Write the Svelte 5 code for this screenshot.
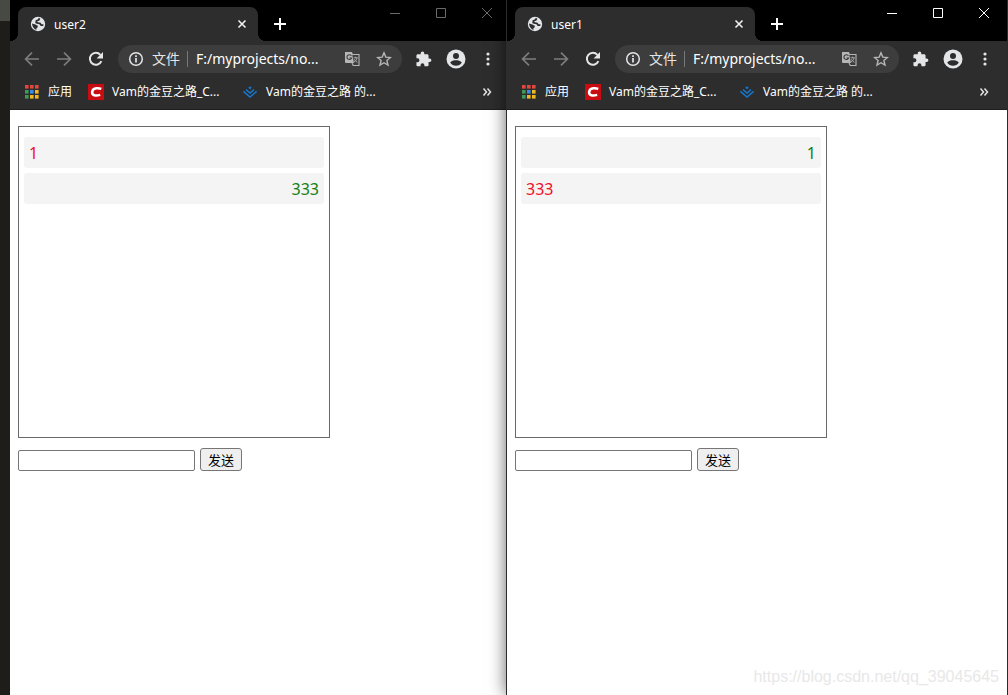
<script>
  const windows = [
    {
      name: 'user2',
      active: false,
      messages: [
        { text: '1', own: false },
        { text: '333', own: true }
      ]
    },
    {
      name: 'user1',
      active: true,
      messages: [
        { text: '1', own: true },
        { text: '333', own: false }
      ]
    }
  ];
  const cells = [
    '#e0483e', '#e0483e', '#e0483e',
    '#3f9b58', '#3b8be8', '#f2b824',
    '#3f9b58', '#f2b824', '#f2b824'
  ];
</script>

<main class="desktop">
  <div class="backdrop"></div>
  {#each windows as win}
    <section class="window" class:active={win.active} aria-label={win.name}>
      <header class="titlebar">
        <div class="tab">
          <svg class="globe" width="16" height="16" viewBox="0 0 16 16" aria-hidden="true">
            <circle cx="8" cy="8" r="7.2" fill="#e4e5e7" />
            <path d="M9.6 2.2 8.6 4 6.4 4.8 6.2 6.6 8.2 7.2 10 7.4 11 9 13.4 9.2" fill="none" stroke="#2d2d2d" stroke-width="1.8" stroke-linejoin="round" />
            <path d="M2 7.6 5.4 8.6 7.8 9.8 7.6 11.4 6.4 12.2 6.4 14Q2.400 12.400 2 7.600z" fill="#2d2d2d" />
          </svg>
          <span class="title">{win.name}</span>
          <button class="tab-close" aria-label="关闭标签页">
            <svg width="16" height="16" viewBox="0 0 16 16"><path d="M4.5 4.5l7 7M11.5 4.5l-7 7" stroke="#f1f1f1" stroke-width="1.6" /></svg>
          </button>
        </div>
        <button class="new-tab" aria-label="新标签页">
          <svg width="16" height="16" viewBox="0 0 16 16"><path d="M8 2v12M2 8h12" stroke="#fff" stroke-width="2" /></svg>
        </button>
        <div class="controls">
          <button aria-label="最小化"><svg width="12" height="12" viewBox="0 0 12 12"><path d="M1 6.5h10" /></svg></button>
          <button aria-label="最大化"><svg width="12" height="12" viewBox="0 0 12 12"><path d="M1.5 1.5h9v9h-9z" /></svg></button>
          <button aria-label="关闭"><svg width="12" height="12" viewBox="0 0 12 12"><path d="M1 1l10 10M11 1L1 11" /></svg></button>
        </div>
      </header>

      <nav class="toolbar" aria-label="导航">
        <button class="tool dim" aria-label="后退">
          <svg width="16" height="16" viewBox="0 0 16 16"><path d="M15 8H2M8 1.6 1.6 8 8 14.4" fill="none" stroke="currentColor" stroke-width="1.7" /></svg>
        </button>
        <button class="tool dim" aria-label="前进">
          <svg width="16" height="16" viewBox="0 0 16 16"><path d="M1 8h13M8 1.6 14.4 8 8 14.4" fill="none" stroke="currentColor" stroke-width="1.7" /></svg>
        </button>
        <button class="tool" aria-label="重新加载">
          <svg width="16" height="16" viewBox="0 0 16 16"><path d="M13.4 10.2A6 6 0 1 1 12.4 3.8" fill="none" stroke="currentColor" stroke-width="2" /><path d="M15 1v6.4H8.6z" fill="currentColor" /></svg>
        </button>
        <div class="omnibox">
          <svg class="info" width="16" height="16" viewBox="0 0 16 16" aria-hidden="true"><circle cx="8" cy="8" r="6.3" fill="none" stroke="#e4e5e7" stroke-width="1.5" /><path d="M8 7v4.6M8 4.3v1.7" stroke="#e4e5e7" stroke-width="1.7" /></svg>
          <span class="scheme">文件</span>
          <input class="url" aria-label="地址" value="F:/myprojects/no..." />
          <button class="tool soft" aria-label="翻译">
            <svg width="16" height="16" viewBox="0 0 16 16"><path d="M1 1h7l1 2.5h-.8L10 12H2a1 1 0 0 1-1-1z" fill="#b5b6b8" /><path d="M8.2 3.5H15v11H9.2L8 12" fill="none" stroke="#b5b6b8" stroke-width="1.1" /><path d="M7.4 4.9A2.4 2.4 0 1 0 7.6 7H5.4" fill="none" stroke="#3b3b3b" stroke-width="1.1" /><path d="M9.6 6.8h4.2M11.6 5.6v1.2M13 7c-.4 2-1.6 3.2-3 4M10.4 8.2c.6 1.3 1.6 2.4 3 3.2" fill="none" stroke="#b5b6b8" stroke-width=".9" /></svg>
          </button>
          <button class="tool soft" aria-label="添加书签">
            <svg width="16" height="16" viewBox="0 0 16 16"><path d="M8 1.8l1.8 4.3 4.6.4-3.5 3 1.1 4.6L8 11.7l-4 2.4 1.1-4.6-3.5-3 4.6-.4z" fill="none" stroke="currentColor" stroke-width="1.4" /></svg>
          </button>
        </div>
        <button class="tool" aria-label="扩展程序">
          <svg width="16" height="16" viewBox="0 0 24 24"><path transform="translate(-1.5 -.5) scale(1.07)" fill="currentColor" d="M20.5 11H19V7c0-1.1-.9-2-2-2h-4V3.500a2.500 2.500 0 0 0-5 0V5H4c-1.100 0-2 .9-2 2v3.800h1.500a2.700 2.700 0 0 1 0 5.400H2V20c0 1.100.9 2 2 2h3.800v-1.500a2.700 2.700 0 0 1 5.400 0V22H17c1.100 0 2-.9 2-2v-4h1.500a2.500 2.500 0 0 0 0-5z" /></svg>
        </button>
        <button class="tool" aria-label="个人资料">
          <svg width="20" height="20" viewBox="0 0 20 20"><circle cx="10" cy="10" r="9.500" fill="currentColor" /><circle cx="10" cy="7" r="3" fill="#2d2d2d" /><path d="M4.200 13.600C5.300 11.900 8 11.300 10 11.300s4.700.6 5.800 2.300A7 7 0 0 1 10 16.800a7 7 0 0 1-5.800-3.200z" fill="#2d2d2d" /></svg>
        </button>
        <button class="tool" aria-label="菜单">
          <svg width="16" height="16" viewBox="0 0 16 16"><g fill="currentColor"><circle cx="8" cy="3" r="1.600" /><circle cx="8" cy="8" r="1.600" /><circle cx="8" cy="13" r="1.600" /></g></svg>
        </button>
      </nav>

      <nav class="bookmarks" aria-label="书签">
        <a href="#apps">
          <svg width="16" height="16" viewBox="0 0 16 16" aria-hidden="true">
            {#each cells as fill, i}
              <rect x={1 + (i % 3) * 5} y={1 + Math.floor(i / 3) * 5} width="3.600" height="3.600" {fill} />
            {/each}
          </svg>
          <span>应用</span>
        </a>
        <a class="site" href="#csdn">
          <svg width="16" height="16" viewBox="0 0 16 16" aria-hidden="true"><rect width="16" height="16" fill="#c90c12" /><path d="M13.300 4.900C10.800 4 5.200 3.400 4.200 7.600c-.9 4.200 3.800 4.400 8 3.300" fill="none" stroke="#fff" stroke-width="2.500" /></svg>
          <span>Vam的金豆之路_C...</span>
        </a>
        <a class="site" href="#juejin">
          <svg width="16" height="16" viewBox="0 0 16 16" aria-hidden="true"><g fill="none" stroke="#1478d2" stroke-width="1.400"><path d="M1.400 7.400 8 13l6.600-5.600M4 5.600 8 9l4-3.400" /></g><path d="M8 2.200l1.800 1.500L8 5.200 6.200 3.700z" fill="#1478d2" /></svg>
          <span>Vam的金豆之路 的...</span>
        </a>
        <button class="overflow" aria-label="更多书签">
          <svg width="10" height="10" viewBox="0 0 10 10"><path d="M1.500 1.500 4.500 5l-3 3.500M5.500 1.500 8.500 5l-3 3.500" fill="none" stroke="#e4e5e7" stroke-width="1.500" /></svg>
        </button>
      </nav>

      <div class="page">
        <ul class="log">
          {#each win.messages as message}
            <li class:own={message.own}>{message.text}</li>
          {/each}
        </ul>
        <form class="composer" onsubmit={(e) => e.preventDefault()}>
          <input type="text" aria-label="消息" />
          <button type="submit">发送</button>
        </form>
      </div>
    </section>
  {/each}
  <span class="watermark">https://blog.csdn.net/qq_39045645</span>
</main>

<style>
  :global(body) {
    margin: 0;
    background: #1e1d1a;
  }
  .desktop {
    position: relative;
    display: flex;
    min-height: 100vh;
    overflow: hidden;
    font-family: "Noto Sans", "Noto Sans CJK SC", sans-serif;
    font-size: 12px;
  }
  .backdrop {
    flex: none;
    width: 10px;
    background: linear-gradient(#474943 21px, #1e1d1a 21px);
  }
  .window {
    flex: 1 1 0;
    min-width: 0;
    display: flex;
    flex-direction: column;
    background: #fff;
  }
  .active {
    position: relative;
    margin-left: -4px;
    border: solid #2b2b2b;
    border-width: 0 1px;
    box-shadow: 0 0 16px rgba(0, 0, 0, 0.6);
  }
  button {
    display: flex;
    align-items: center;
    justify-content: center;
    padding: 0;
    border: 0;
    background: none;
    color: inherit;
    font-family: inherit;
  }
  svg {
    flex: none;
  }
  .titlebar {
    display: flex;
    align-items: flex-end;
    height: 41px;
    padding-left: 8px;
    background: #000;
  }
  .tab {
    position: relative;
    display: flex;
    align-items: center;
    gap: 8px;
    box-sizing: border-box;
    width: 240px;
    height: 34px;
    padding: 0 8px 0 12px;
    border-radius: 8px 8px 0 0;
    background: #2d2d2d;
    color: #fff;
  }
  .tab::before,
  .tab::after {
    content: "";
    position: absolute;
    bottom: 0;
    width: 8px;
    height: 8px;
  }
  .tab::before {
    right: 100%;
    background: radial-gradient(circle at 0 0, transparent 8px, #2d2d2d 8px);
  }
  .tab::after {
    left: 100%;
    background: radial-gradient(circle at 100% 0, transparent 8px, #2d2d2d 8px);
  }
  .title {
    flex: 1;
  }
  .new-tab {
    width: 28px;
    height: 34px;
    margin-left: 8px;
  }
  .controls {
    display: flex;
    align-self: flex-start;
    margin-left: auto;
  }
  .controls button {
    width: 46px;
    height: 26px;
  }
  .controls path {
    fill: none;
    stroke: #6b6b6b;
  }
  .active .controls path {
    stroke: #fff;
  }
  .toolbar {
    display: flex;
    align-items: center;
    height: 36px;
    padding: 0 6px;
    background: #2d2d2d;
    color: #e4e5e7;
  }
  .tool {
    flex: none;
    width: 32px;
    height: 28px;
  }
  .dim {
    color: #7d7d7d;
  }
  .soft {
    color: #b5b6b8;
  }
  .omnibox {
    flex: 1;
    min-width: 0;
    display: flex;
    align-items: center;
    height: 28px;
    margin: 0 6px;
    padding: 0 2px 0 10px;
    border-radius: 14px;
    background: #3d3d3d;
    font-size: 14px;
  }
  .scheme {
    margin-left: 8px;
    padding-right: 7px;
    border-right: 1px solid #77787a;
    line-height: 16px;
  }
  .url {
    flex: 1;
    min-width: 0;
    height: 24px;
    padding: 0 0 2px 8px;
    border: 0;
    outline: 0;
    background: none;
    color: #fff;
    font: inherit;
  }
  .bookmarks {
    display: flex;
    align-items: center;
    gap: 16px;
    box-sizing: border-box;
    height: 33px;
    padding: 0 18px 3px 14px;
    border-bottom: 1px solid #201f20;
    background: #2d2d2d;
  }
  .bookmarks a {
    display: flex;
    align-items: center;
    gap: 8px;
    height: 24px;
    color: #fff;
    line-height: 16px;
    text-decoration: none;
    white-space: nowrap;
  }
  .bookmarks .site {
    min-width: 138px;
  }
  .overflow {
    height: 24px;
    margin-left: auto;
  }
  .page {
    padding: 16px 8px;
    font-size: 16px;
  }
  .log {
    width: 300px;
    height: 300px;
    margin: 0;
    padding: 5px;
    border: 1px solid #696969;
    list-style: none;
  }
  .log li {
    margin: 5px 0;
    padding: 6px 5px 4px;
    border-radius: 3px;
    background: #f4f4f4;
    color: #f00f28;
    line-height: 21px;
  }
  .log .own {
    color: #118011;
    text-align: right;
  }
  .composer {
    display: flex;
    align-items: flex-end;
    gap: 5px;
    margin-top: 10px;
  }
  .composer input {
    box-sizing: border-box;
    width: 177px;
    height: 21px;
    padding: 1px 2px;
    border: 1px solid #767676;
    border-radius: 2px;
    background: #fff;
  }
  .composer button {
    box-sizing: border-box;
    width: 42px;
    height: 23px;
    border: 1px solid #767676;
    border-radius: 3px;
    background: #efefef;
    color: #000;
    font-size: 13px;
    line-height: 16px;
  }
  .watermark {
    position: absolute;
    right: 9px;
    bottom: 9px;
    color: #e8e8e8;
    font: 16px/18px "Liberation Sans", sans-serif;
  }
</style>
